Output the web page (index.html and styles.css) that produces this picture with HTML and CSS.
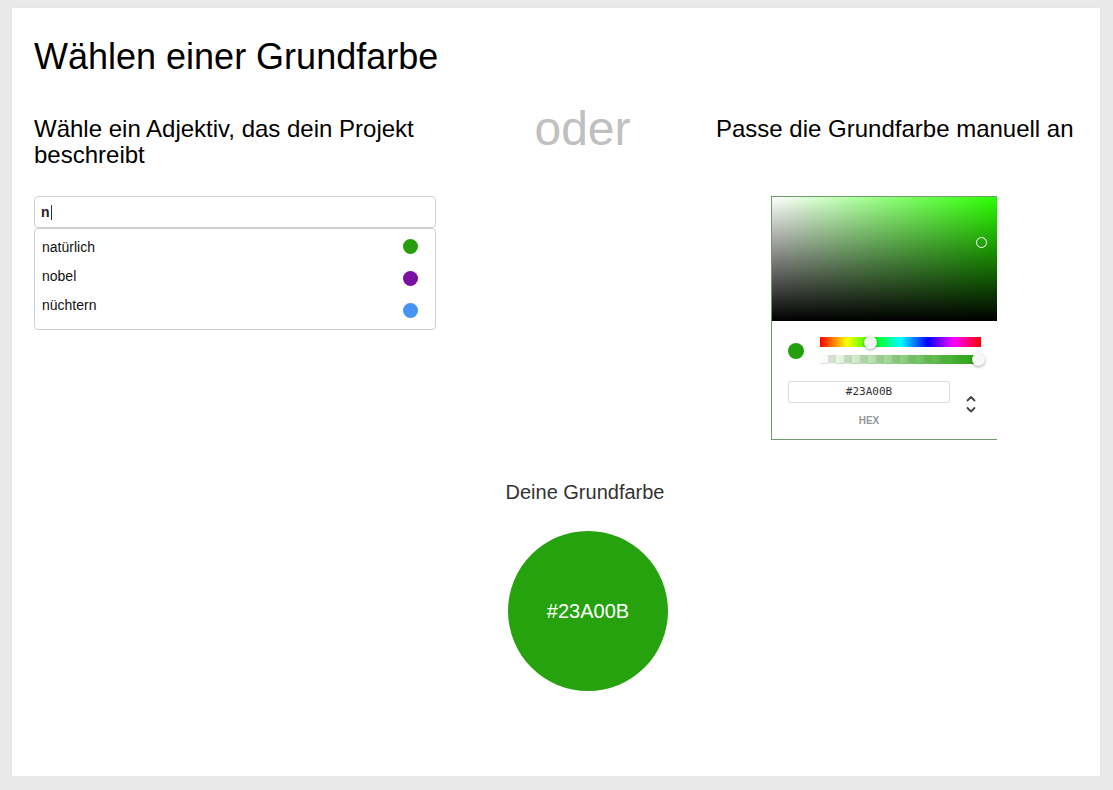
FILE: index.html
```html
<!DOCTYPE html>
<html lang="de">
<head>
<meta charset="utf-8">
<title>Grundfarbe wählen</title>
<link rel="stylesheet" href="styles.css">
</head>
<body>
<main class="card">
  <h1 class="title">Wählen einer Grundfarbe</h1>
  <section class="grid">
    <h2 class="heading">Wähle ein Adjektiv, das dein Projekt beschreibt</h2>
    <div class="oder">oder</div>
    <h2 class="heading nowrap">Passe die Grundfarbe manuell an</h2>

    <div class="search">
      <div class="search-input"><span class="typed">n</span><span class="caret"></span></div>
      <div class="dropdown">
        <ul class="labels">
          <li>natürlich</li>
          <li>nobel</li>
          <li>nüchtern</li>
        </ul>
        <ul class="dots">
          <li class="dot green"></li>
          <li class="dot purple"></li>
          <li class="dot blue"></li>
        </ul>
      </div>
    </div>
    <div></div>
    <div class="picker-col">
      <div class="picker">
        <div class="saturation">
          <div class="sat-white"></div>
          <div class="sat-black"></div>
          <span class="sat-cursor"></span>
        </div>
        <div class="controls">
          <div class="control-row">
            <span class="swatch"></span>
            <div class="sliders">
              <div class="hue"><span class="thumb hue-thumb"></span></div>
              <div class="alpha"><div class="alpha-fill"></div><span class="thumb alpha-thumb"></span></div>
            </div>
          </div>
          <div class="field-row">
            <div class="field">
              <div class="hex-input">#23A00B</div>
              <div class="hex-label">HEX</div>
            </div>
            <div class="toggle">
              <svg width="12" height="20" viewBox="0 0 12 20" fill="none" stroke="#444" stroke-width="1.8" stroke-linecap="round" stroke-linejoin="round">
                <path d="M2.5 6.5 L6 3 L9.5 6.5"/>
                <path d="M2.5 14 L6 17.5 L9.5 14"/>
              </svg>
            </div>
          </div>
        </div>
      </div>
    </div>
  </section>

  <section class="result">
    <p class="result-label">Deine Grundfarbe</p>
    <div class="result-circle">#23A00B</div>
  </section>
</main>
</body>
</html>
```
FILE: styles.css
```css
html, body {
  margin: 0;
  padding: 0;
}
body {
  background: #e9e9e9;
  font-family: "Liberation Sans", Arial, sans-serif;
  color: #000;
}
.card {
  box-sizing: border-box;
  margin: 8px 13px 0 12px;
  height: 768px;
  background: #fff;
  padding: 28px 22px 0 22px;
  box-shadow: 0 0 3px rgba(0,0,0,0.04);
}
.title {
  margin: 0;
  font-size: 36px;
  line-height: 41px;
  font-weight: normal;
}
.grid {
  margin-top: 39px;
  display: grid;
  grid-template-columns: 402px 280px 362px;
  grid-template-rows: 52px auto;
  row-gap: 28px;
}
.heading {
  margin: 0;
  font-size: 24px;
  line-height: 26px;
  font-weight: normal;
}
.nowrap { white-space: nowrap; }
.oder {
  font-size: 48px;
  line-height: 26px;
  color: #c0c0c0;
  text-align: center;
  padding-left: 13px;
}
.search-input {
  box-sizing: border-box;
  height: 32px;
  border: 1px solid #cfcfcf;
  border-radius: 4px;
  display: flex;
  align-items: center;
  padding-left: 6px;
  font-size: 14px;
  color: #222;
}
.typed { font-weight: bold; }
.caret {
  display: inline-block;
  width: 1px;
  height: 15px;
  background: #333;
  margin-left: 1px;
}
.dropdown {
  box-sizing: border-box;
  height: 102px;
  border: 1px solid #cfcfcf;
  border-radius: 4px;
  display: flex;
  justify-content: space-between;
  padding: 4px 17px 0 7px;
}
.labels, .dots {
  list-style: none;
  margin: 0;
  padding: 0;
}
.labels li {
  font-size: 14px;
  line-height: 29px;
  color: #111;
}
.dots {
  padding-top: 6px;
  display: flex;
  flex-direction: column;
  gap: 17px;
}
.dot {
  width: 15px;
  height: 15px;
  border-radius: 50%;
}
.green { background: #25a00c; }
.purple { background: #7a0fa3; }
.blue { background: #4593f2; }

.picker-col {
  padding-left: 55px;
}
.picker {
  box-sizing: border-box;
  width: 226px;
  height: 244px;
  border: 1px solid #6f9d69;
  border-right: none;
  background: #fff;
}
.saturation {
  position: relative;
  height: 124px;
  background: #2bff00;
}
.sat-white, .sat-black {
  position: absolute;
  inset: 0;
}
.sat-white { background: linear-gradient(to right, #fff, rgba(255,255,255,0)); }
.sat-black { background: linear-gradient(to top, #000, rgba(0,0,0,0)); }
.sat-cursor {
  position: absolute;
  left: 204px;
  top: 40px;
  width: 9px;
  height: 9px;
  border: 1.5px solid #fff;
  border-radius: 50%;
}
.controls {
  padding: 16px 0 0 16px;
}
.control-row {
  display: flex;
  align-items: center;
  gap: 16px;
}
.swatch {
  width: 16px;
  height: 16px;
  border-radius: 50%;
  background: #23a00b;
}
.sliders {
  display: flex;
  flex-direction: column;
  gap: 8px;
  width: 161px;
}
.hue, .alpha {
  position: relative;
  height: 10px;
}
.hue {
  background: linear-gradient(to right, #f00 0%, #ff0 16.66%, #0f0 33.33%, #0ff 50%, #00f 66.66%, #f0f 83.33%, #f00 100%);
}
.alpha {
  height: 9px;
  background: repeating-conic-gradient(#e4e4e4 0 25%, #fff 0 50%) 0 0 / 16px 16px;
}
.alpha-fill {
  position: absolute;
  inset: 0;
  background: linear-gradient(to right, rgba(35,160,11,0), #23a00b);
}
.thumb {
  position: absolute;
  top: 50%;
  width: 13px;
  height: 13px;
  margin-top: -6.5px;
  margin-left: -6.5px;
  border-radius: 50%;
  background: #f8f8f8;
  box-shadow: 0 1px 3px rgba(0,0,0,0.35);
}
.hue-thumb { left: 50px; }
.alpha-thumb { left: 158px; }

.field-row {
  display: flex;
  margin-top: 17px;
}
.field {
  width: 162px;
}
.hex-input {
  box-sizing: border-box;
  height: 22px;
  border: 1px solid #dcdcdc;
  border-radius: 2px;
  font-family: "DejaVu Sans Mono", "Liberation Mono", monospace;
  font-size: 11px;
  line-height: 20px;
  text-align: center;
  color: #333;
}
.hex-label {
  margin-top: 12px;
  font-size: 10px;
  line-height: 12px;
  font-weight: bold;
  color: #969696;
  text-align: center;
}
.toggle {
  margin: 13px 0 0 15px;
}
.toggle svg { display: block; }

.result {
  margin: 41px 0 0 401px;
  width: 300px;
  text-align: center;
}
.result-label {
  margin: 0;
  font-size: 20px;
  line-height: 23px;
  color: #333;
}
.result-circle {
  margin: 27px 0 0 73px;
  width: 160px;
  height: 160px;
  border-radius: 50%;
  background: #25a20d;
  color: #fff;
  font-size: 20px;
  display: flex;
  align-items: center;
  justify-content: center;
}
```
